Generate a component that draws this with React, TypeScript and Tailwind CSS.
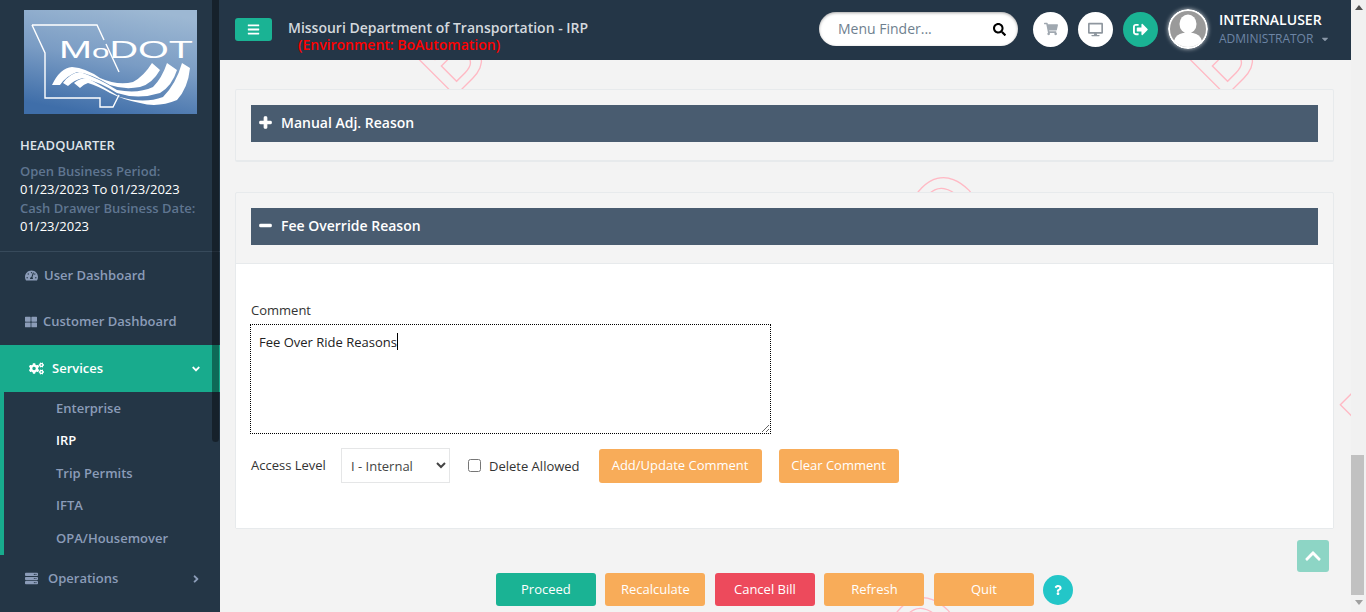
import { ReactNode } from 'react';
import {
  FaAngleDown,
  FaAngleRight,
  FaBars,
  FaCaretDown,
  FaChevronUp,
  FaCogs,
  FaDesktop,
  FaMinus,
  FaPlus,
  FaQuestion,
  FaSearch,
  FaServer,
  FaShoppingCart,
  FaSignOutAlt,
  FaTachometerAlt,
  FaThLarge,
} from 'react-icons/fa';

const subItems = ['Enterprise', 'IRP', 'Trip Permits', 'IFTA', 'OPA/Housemover'];

const footerButtons = [
  { label: 'Proceed', color: 'bg-[#1ab394]' },
  { label: 'Recalculate', color: 'bg-[#f8ac59]' },
  { label: 'Cancel Bill', color: 'bg-[#ed4a5c]' },
  { label: 'Refresh', color: 'bg-[#f8ac59]' },
  { label: 'Quit', color: 'bg-[#f8ac59]' },
];

function Logo() {
  return (
    <svg width="173" height="104" viewBox="0 0 173 104" className="block">
      <defs>
        <linearGradient id="logoBg" x1="0.7" y1="0" x2="0.4" y2="1">
          <stop offset="0" stopColor="#9db8d3" />
          <stop offset="0.5" stopColor="#7a9cc4" />
          <stop offset="1" stopColor="#3f6ea9" />
        </linearGradient>
      </defs>
      <rect width="173" height="104" fill="url(#logoBg)" />
      <path
        d="M8 15 L73 15 L80 30 M82 34 L95 62 M8 15 L21 43 L21 88 L76 88 L76 97 L89 97 L95 85"
        fill="none"
        stroke="#fff"
        strokeWidth="1.4"
      />
      <text x="35" y="48" fontFamily="Liberation Sans, sans-serif" fontSize="24" fill="#fff" textLength="134" lengthAdjust="spacingAndGlyphs">
        M<tspan fontSize="19">o</tspan>DOT
      </text>
      <path d="M28 75 Q36 58 48 57 Q62 58 76 68 Q94 76 109 72 Q120 66 128 53 L136 60 Q128 74 116 77 Q100 80 86 75 Q68 64 53 62 Q42 66 36 75 Z" fill="#fff" />
      <path d="M39 73 Q46 63 56 62 Q74 68 93 80 Q114 84 129 77 Q138 68 143 53 L153 60 Q148 76 136 83 Q114 90 93 83 Q76 72 59 68 Q50 70 44 76 Z" fill="#fff" />
      <path d="M50 73 Q56 68 63 68 Q78 76 96 87 Q120 94 139 87 Q152 74 158 53 L166 58 Q164 78 153 90 Q134 98 116 93 Q100 90 86 83 Q74 76 64 73 Q60 74 56 78 Z" fill="#fff" />
    </svg>
  );
}

function Avatar() {
  return (
    <svg width="40" height="40" viewBox="0 0 40 40" className="rounded-full shadow-[0_0_4px_rgba(255,255,255,0.7)]">
      <circle cx="20" cy="20" r="19" fill="#9a9a9a" stroke="#fff" strokeWidth="2" />
      <ellipse cx="20" cy="15" rx="8.5" ry="9.5" fill="#fff" />
      <path d="M6 32 Q8 25 15 24 L25 24 Q32 25 34 32 Q28 38 20 38 Q12 38 6 32 Z" fill="#fff" />
    </svg>
  );
}

function NavItem({ icon, label, height }: { icon: ReactNode; label: string; height: string }) {
  return (
    <div className={`flex items-center gap-[6px] pl-[25px] text-[13px] font-semibold text-[#8b9cb8] ${height}`}>
      {icon}
      <span>{label}</span>
    </div>
  );
}

function Sidebar() {
  return (
    <aside className="relative h-full w-[220px] shrink-0 overflow-hidden bg-[#243646]">
      <div className="pl-[24px] pt-[10px]">
        <Logo />
      </div>
      <div className="border-b border-[#374a5b] pb-[15px] pl-[20px] pt-[22px] text-[13px] leading-[18.5px]">
        <div className="mb-[7px] font-semibold text-[#dfe4ea]">HEADQUARTER</div>
        <div className="font-semibold text-[#5f7590]">Open Business Period:</div>
        <div className="text-white">01/23/2023 To 01/23/2023</div>
        <div className="font-semibold text-[#5f7590]">Cash Drawer Business Date:</div>
        <div className="text-white">01/23/2023</div>
      </div>
      <NavItem icon={<FaTachometerAlt size={13} />} label="User Dashboard" height="h-[48px]" />
      <NavItem icon={<FaThLarge size={12} />} label="Customer Dashboard" height="h-[45px]" />
      <div className="flex h-[47px] items-center bg-[#18ab8d] pl-[29px] pr-[18px] pt-[1px] text-[13px] font-semibold text-white">
        <FaCogs size={15} />
        <span className="ml-[8px] flex-1">Services</span>
        <FaAngleDown size={12} />
      </div>
      <div className="flex h-[163px] flex-col border-l-[4px] border-[#18ab8d] pl-[52px] pt-[1px] text-[13px] font-semibold text-[#8b9cb8]">
        {subItems.map((item) => (
          <div key={item} className={`flex h-[32.4px] items-center ${item === 'IRP' ? 'text-white' : ''}`}>
            {item}
          </div>
        ))}
      </div>
      <div className="flex h-[48px] items-center pl-[25px] pr-[18px] text-[13px] font-semibold text-[#8b9cb8]">
        <FaServer size={13} />
        <span className="ml-[10px] flex-1">Operations</span>
        <FaAngleRight size={12} />
      </div>
      {/* sidebar scrollbar sits on top of the menu */}
      <div className="absolute left-[212px] top-0 h-[442px] w-[7px] rounded-b-[4px] bg-[rgba(0,0,0,0.38)]" />
    </aside>
  );
}

function Header() {
  return (
    <header className="relative z-10 flex h-[60px] shrink-0 items-center bg-[#243647] pb-[2px] pl-[15px] pr-[30px]">
      <button className="flex h-[23px] w-[37px] items-center justify-center rounded-[3px] bg-[#1ab394] text-white">
        <FaBars size={13} />
      </button>
      <div className="ml-[16px] flex-1 pt-[13px] text-[14px] font-semibold leading-[17px]">
        <div className="text-[#d4d9de]">Missouri Department of Transportation - IRP</div>
        <div className="pl-[10px] text-[#ff0000]">(Environment: BoAutomation)</div>
      </div>
      <div className="flex h-[34px] w-[199px] items-center rounded-full bg-white pl-[19px] pr-[12px] shadow-[inset_0_1px_3px_rgba(0,0,0,0.35)]">
        <span className="flex-1 pb-[2px] text-[14px] text-[#6f7f8f]">Menu Finder...</span>
        <FaSearch size={13} className="text-black" />
      </div>
      <div className="ml-[15px] flex h-[35px] w-[35px] items-center justify-center rounded-full bg-white text-[#a0a8b0]">
        <FaShoppingCart size={14} />
      </div>
      <div className="ml-[10px] flex h-[35px] w-[35px] items-center justify-center rounded-full bg-white text-[#8f979f]">
        <FaDesktop size={15} />
      </div>
      <div className="ml-[10px] flex h-[35px] w-[35px] items-center justify-center rounded-full bg-[#1ab394] text-white">
        <FaSignOutAlt size={15} />
      </div>
      <div className="ml-[10px]">
        <Avatar />
      </div>
      <div className="ml-[11px] w-[102px]">
        <div className="text-[14px] font-semibold leading-[19px] text-white">INTERNALUSER</div>
        <div className="flex items-center gap-[7px] text-[12px] leading-[19px] text-[#6d85a5]">
          ADMINISTRATOR
          <FaCaretDown size={10} className="shrink-0 text-[#8a98a8]" />
        </div>
      </div>
    </header>
  );
}

// diagonal environment watermark, coordinates are page coordinates
function Watermark() {
  const marks = [
    { x: 449, y: 102, anchor: 'start', text: 'BO' },
    { x: 1220, y: 102, anchor: 'start', text: 'BO' },
    { x: 997, y: 210, anchor: 'end', text: 'BO' },
    { x: 1382, y: 459, anchor: 'start', text: 'BO' },
    { x: 976, y: 630, anchor: 'end', text: 'BO' },
  ];
  return (
    <svg className="pointer-events-none absolute left-[-220px] top-[-60px] h-[612px] w-[1366px]">
      {marks.map((m) => (
        <text
          key={`${m.x}-${m.y}`}
          x={m.x}
          y={m.y}
          transform={`rotate(-45 ${m.x} ${m.y})`}
          textAnchor={m.anchor}
          fontFamily="Open Sans, sans-serif"
          fontWeight="600"
          fontSize="95"
          fill="none"
          stroke="#ffb9c4"
          strokeWidth="1.3"
        >
          {m.text}
        </text>
      ))}
    </svg>
  );
}

function PanelHeading({ icon, title }: { icon: ReactNode; title: string }) {
  return (
    <div className="flex h-[37px] items-center gap-[9px] bg-[#495c70] pb-[2px] pl-[8px] text-[14px] font-semibold text-white">
      {icon}
      {title}
    </div>
  );
}

function CommentForm() {
  return (
    <div className="border-t border-[#e7eaec] bg-white pb-[45px] pl-[15px] pr-[15px] pt-[37px] text-[13px] text-[#333]">
      <div className="mb-[5px] leading-[18px]">Comment</div>
      <div className="relative ml-[-1px] h-[110px] w-[521px]">
        <textarea
          readOnly
          defaultValue="Fee Over Ride Reasons"
          className="block h-[110px] w-[521px] border border-dotted border-black px-[8px] py-[8px] text-[13px] leading-[18px] text-[#222] outline-none"
        />
        <span className="absolute left-[147px] top-[9px] h-[17px] w-px bg-black" />
      </div>
      <div className="mt-[14px] flex h-[35px] items-center">
        <span className="w-[90px]">Access Level</span>
        <select className="h-[35px] w-[109px] border border-[#e5e6e7] bg-white pl-[5px] pt-[1px] text-[13px] text-[#444]" defaultValue="I">
          <option value="I">I - Internal</option>
        </select>
        <label className="ml-[18px] flex items-center gap-[8px] pt-[2px]">
          <input type="checkbox" className="mb-[3px] h-[13px] w-[13px]" />
          Delete Allowed
        </label>
        <button className="ml-[19px] h-[34px] w-[163px] rounded-[3px] bg-[#f8ac59] text-white">Add/Update Comment</button>
        <button className="ml-[17px] h-[34px] w-[120px] rounded-[3px] bg-[#f8ac59] text-white">Clear Comment</button>
      </div>
    </div>
  );
}

function Content() {
  return (
    <div className="relative flex-1 overflow-hidden bg-[#f3f3f3]">
      <Watermark />
      <div className="relative pl-[15px] pr-[17px] pt-[29px]">
        <section className="rounded-[2px] border border-b-2 border-[#e7eaec] bg-[#f4f4f4] px-[15px] pb-[18px] pt-[15px]">
          <PanelHeading icon={<FaPlus size={13} stroke="currentColor" strokeWidth={50} />} title="Manual Adj. Reason" />
        </section>
        <section className="mt-[30px] rounded-[2px] border border-[#e7eaec] bg-[#f4f4f4]">
          <div className="px-[15px] pb-[18px] pt-[15px]">
            <PanelHeading icon={<FaMinus size={13} stroke="currentColor" strokeWidth={50} />} title="Fee Override Reason" />
          </div>
          <CommentForm />
        </section>
        <div className="mt-[44px] flex items-center pl-[260.9px]">
          {footerButtons.map((b) => (
            <button
              key={b.label}
              className={`mr-[9.5px] h-[33px] w-[100px] rounded-[3px] text-[13px] text-white ${b.color}`}
            >
              {b.label}
            </button>
          ))}
          <div className="flex h-[30px] w-[30px] items-center justify-center rounded-full bg-[#23c6c8] text-white">
            <FaQuestion size={10} />
          </div>
        </div>
      </div>
      <div className="absolute left-[1077px] top-[480px] flex h-[32px] w-[32px] items-center justify-center rounded-[3px] bg-[#8dd5c5] text-white">
        <FaChevronUp size={18} />
      </div>
    </div>
  );
}

function PageScrollbar() {
  return (
    <div className="flex h-full w-[15px] shrink-0 flex-col items-center justify-between bg-[#f1f1f1]">
      <div className="mt-[5px] h-0 w-0 border-x-[4px] border-b-[5px] border-x-transparent border-b-[#505050]" />
      <div className="mt-auto h-[140px] w-[13px] self-start bg-[#c1c1c1]" />
      <div className="mb-[7px] mt-[5px] h-0 w-0 border-x-[4px] border-t-[5px] border-x-transparent border-t-[#a0a0a0]" />
    </div>
  );
}

export default function App() {
  return (
    <div className="flex h-[612px] w-[1366px] overflow-hidden font-['Open_Sans',sans-serif]">
      <Sidebar />
      <main className="flex h-full min-w-0 flex-1 flex-col">
        <Header />
        <Content />
      </main>
      <PageScrollbar />
    </div>
  );
}
